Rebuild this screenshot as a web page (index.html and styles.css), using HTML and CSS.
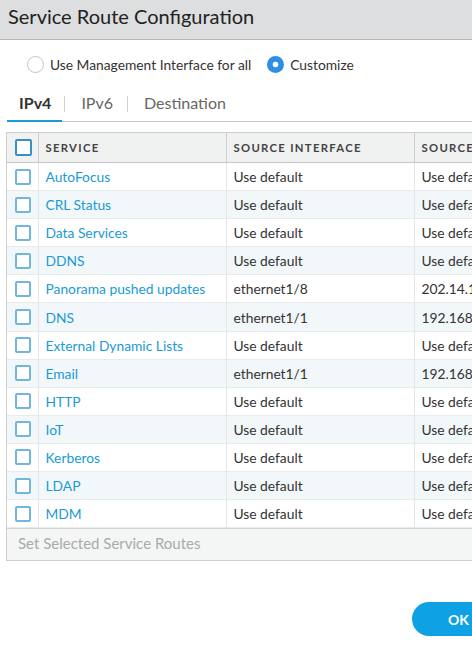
FILE: index.html
```html
<!DOCTYPE html>
<html>
<head>
<meta charset="utf-8">
<link rel="stylesheet" href="styles.css">
</head>
<body>
<div class="dialog">
  <div class="titlebar">Service Route Configuration</div>
  <div class="radios">
    <label class="radio"><span class="circle"></span>Use Management Interface for all</label>
    <label class="radio"><span class="circle on"></span>Customize</label>
  </div>
  <div class="tabs">
    <div class="tab active">IPv4</div>
    <span class="sep"></span>
    <div class="tab">IPv6</div>
    <span class="sep"></span>
    <div class="tab">Destination</div>
  </div>
  <div class="grid">
    <table>
      <colgroup><col class="c1"><col class="c2"><col class="c3"><col class="c4"></colgroup>
      <thead>
        <tr><th><span class="cb head"></span></th><th>SERVICE</th><th>SOURCE INTERFACE</th><th>SOURCE ADDRESS</th></tr>
      </thead>
      <tbody>
        <tr><td><span class="cb"></span></td><td class="link">AutoFocus</td><td>Use default</td><td>Use default</td></tr>
        <tr><td><span class="cb"></span></td><td class="link">CRL Status</td><td>Use default</td><td>Use default</td></tr>
        <tr><td><span class="cb"></span></td><td class="link">Data Services</td><td>Use default</td><td>Use default</td></tr>
        <tr><td><span class="cb"></span></td><td class="link">DDNS</td><td>Use default</td><td>Use default</td></tr>
        <tr><td><span class="cb"></span></td><td class="link">Panorama pushed updates</td><td>ethernet1/8</td><td>202.14.1.1/24</td></tr>
        <tr><td><span class="cb"></span></td><td class="link">DNS</td><td>ethernet1/1</td><td>192.168.1.1/24</td></tr>
        <tr><td><span class="cb"></span></td><td class="link">External Dynamic Lists</td><td>Use default</td><td>Use default</td></tr>
        <tr><td><span class="cb"></span></td><td class="link">Email</td><td>ethernet1/1</td><td>192.168.1.1/24</td></tr>
        <tr><td><span class="cb"></span></td><td class="link">HTTP</td><td>Use default</td><td>Use default</td></tr>
        <tr><td><span class="cb"></span></td><td class="link">IoT</td><td>Use default</td><td>Use default</td></tr>
        <tr><td><span class="cb"></span></td><td class="link">Kerberos</td><td>Use default</td><td>Use default</td></tr>
        <tr><td><span class="cb"></span></td><td class="link">LDAP</td><td>Use default</td><td>Use default</td></tr>
        <tr><td><span class="cb"></span></td><td class="link">MDM</td><td>Use default</td><td>Use default</td></tr>
      </tbody>
    </table>
    <div class="gridfoot">Set Selected Service Routes</div>
  </div>
  <div class="actions">
    <button class="ok">OK</button>
  </div>
</div>
</body>
</html>
```
FILE: styles.css
```css
html, body {
  margin: 0;
  padding: 0;
  overflow: hidden;
  background: #fff;
}
body {
  font-family: Lato, "Open Sans", sans-serif;
  color: #333;
  width: 472px;
  height: 645px;
}
.dialog {
  width: 540px;
}
.titlebar {
  height: 39px;
  line-height: 33px;
  background: #dddedf;
  border-bottom: 1px solid #b4b4b4;
  padding-left: 8px;
  font-size: 20px;
  color: #222;
}
.radios {
  display: flex;
  align-items: center;
  gap: 16px;
  padding: 16px 0 0 27px;
  height: 17px;
}
.radio {
  display: flex;
  align-items: center;
  font-size: 13.8px;
  color: #333;
}
.circle {
  width: 15px;
  height: 15px;
  border: 1px solid #c4c4c4;
  border-radius: 50%;
  margin-right: 6px;
  box-sizing: content-box;
  background: #fff;
}
.circle.on {
  width: 17px;
  height: 17px;
  border: none;
  background: radial-gradient(circle, #fff 0, #fff 2.5px, #2d8fe3 3.2px);
}
.tabs {
  display: flex;
  align-items: center;
  margin: 13px 0 0 7px;
  height: 36px;
  border-bottom: 1px solid #c8c8c8;
  box-sizing: border-box;
}
.tab {
  height: 36px;
  line-height: 34px;
  padding: 0 12px;
  font-size: 16px;
  color: #666;
  box-sizing: border-box;
}
.tab.active {
  padding: 0 11px 0 12px;
  font-weight: bold;
  color: #333;
  border-bottom: 2px solid #1a9ad6;
}
.sep {
  width: 1px;
  height: 16px;
  background: #d0d0d0;
  margin: 0 4px 0 2px;
}
.grid {
  margin: 10px 0 0 6px;
  border: 1px solid #cfcfcf;
  width: 700px;
}
table {
  border-collapse: collapse;
  width: 100%;
  table-layout: fixed;
  font-size: 13.8px;
}
col.c1 { width: 31px; }
col.c2 { width: 188px; }
col.c3 { width: 188px; }
th {
  height: 29px;
  background: #f0f1f1;
  border-bottom: 1px solid #c6c6c6;
  border-left: 1px solid #cfcfcf;
  text-align: left;
  font-size: 11.3px;
  font-weight: bold;
  letter-spacing: 1.3px;
  color: #444;
  padding: 0 0 0 7px;
}
th:first-child, td:first-child {
  border-left: none;
  padding: 0 0 0 8px;
}
td {
  height: 27.1px;
  padding: 0 0 0 7px;
  border-left: 1px solid #e4e6e7;
  border-bottom: 1px solid #e8eaeb;
  white-space: nowrap;
  overflow: hidden;
}
tbody tr:nth-child(even) td {
  background: #f2f7f9;
}
td.link {
  color: #1a9ad6;
}
.cb {
  display: block;
  width: 12px;
  height: 12px;
  border: 2px solid #74b5dd;
  border-radius: 2px;
  background: #fff;
}
.cb.head {
  border-color: #3b8dc2;
  width: 13px;
  height: 13px;
}
.gridfoot {
  height: 32px;
  line-height: 28px;
  background: #f4f5f5;
  border-top: 1px solid #d4d4d4;
  padding-left: 11px;
  font-size: 15px;
  color: #aaa;
  box-sizing: border-box;
}
.actions {
  display: flex;
  justify-content: flex-end;
  margin-top: 41px;
  padding-right: 28px;
}
.ok {
  width: 100px;
  height: 34px;
  border: none;
  border-radius: 17px;
  background: #0ea2e5;
  color: #fff;
  font-family: Lato, "Open Sans", sans-serif;
  font-size: 14px;
  font-weight: bold;
  text-align: left;
  padding-left: 36px;
}
```
